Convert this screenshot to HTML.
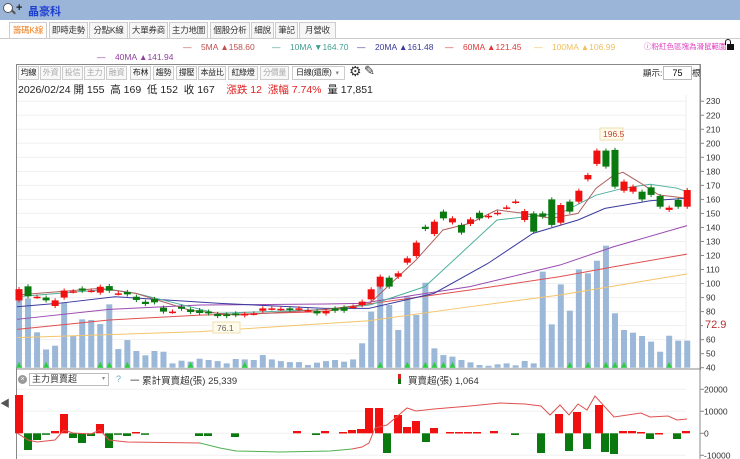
<!DOCTYPE html>
<html><head><meta charset="utf-8">
<style>
*{margin:0;padding:0;box-sizing:border-box}
body{width:740px;height:459px;overflow:hidden;background:#fff;font-family:"Liberation Sans","Noto Sans CJK TC",sans-serif;position:relative}
.a{position:absolute;white-space:nowrap}
.top{left:0;top:0;width:740px;height:20px;background:#9bb5d9}
.tab{position:absolute;top:22px;height:16px;border:1px solid #ccc;border-bottom:none;background:#f6f6f6;font-size:8.5px;line-height:15px;text-align:center;color:#333;white-space:nowrap;overflow:hidden;letter-spacing:-0.2px}
.btn{position:absolute;top:66px;height:14px;border:1px solid #ccc;background:#f8f8f8;font-size:8px;line-height:12px;text-align:center;color:#222;white-space:nowrap;overflow:hidden;letter-spacing:-0.3px}
.g{color:#aaa}
.leg{font-size:8.5px;top:42px}
</style></head><body>
<div class="a top"></div>
<div class="a" style="left:3px;top:3px;width:10px;height:10px;border:1.5px solid #555;border-radius:50%;background:#fff"></div>
<div class="a" style="left:11px;top:11px;width:5px;height:2px;background:#555;transform:rotate(45deg)"></div>
<div class="a" style="left:16px;top:2px;font-size:11px;font-weight:bold;color:#222">+</div>
<div class="a" style="left:28px;top:3px;font-size:11px;font-weight:bold;color:#1d3fd0">晶豪科</div>
<div class="a" style="left:0;top:38px;width:740px;height:1px;background:#ccc"></div>
<div class="tab" style="left:9px;width:38px;background:#fff;color:#f08020">籌碼K線</div>
<div class="tab" style="left:49px;width:39px">即時走勢</div>
<div class="tab" style="left:89px;width:39px">分點K線</div>
<div class="tab" style="left:129px;width:39px">大單券商</div>
<div class="tab" style="left:169px;width:39px">主力地圖</div>
<div class="tab" style="left:210px;width:40px">個股分析</div>
<div class="tab" style="left:251px;width:23px">細說</div>
<div class="tab" style="left:275px;width:23px">筆記</div>
<div class="tab" style="left:299px;width:37px">月營收</div>
<div class="a leg" style="left:183px;color:#c0504d">—&nbsp;&nbsp;&nbsp;&nbsp;5MA ▲158.60</div>
<div class="a leg" style="left:272px;color:#40a090">—&nbsp;&nbsp;&nbsp;&nbsp;10MA ▼164.70</div>
<div class="a leg" style="left:357px;color:#3a3a9a">—&nbsp;&nbsp;&nbsp;&nbsp;20MA ▲161.48</div>
<div class="a leg" style="left:445px;color:#e03838">—&nbsp;&nbsp;&nbsp;&nbsp;60MA ▲121.45</div>
<div class="a leg" style="left:534px;color:#f0c060">—&nbsp;&nbsp;&nbsp;&nbsp;100MA ▲106.99</div>
<div class="a leg" style="left:97px;top:52px;color:#9040a0">—&nbsp;&nbsp;&nbsp;&nbsp;40MA ▲141.94</div>
<div class="a leg" style="left:644px;top:41px;font-size:7.5px;color:#e040c0">ⓘ粉紅色區塊為滑鼠範圍</div>
<div class="a" style="left:727px;top:44px;width:7px;height:6px;background:#111"></div>
<div class="a" style="left:725px;top:39px;width:6px;height:6px;border:1.5px solid #111;border-bottom:none;border-radius:3px 3px 0 0"></div>
<div class="a" style="left:16px;top:64px;width:685px;height:306px;border:1px solid #888;border-bottom:none"></div>
<div class="a" style="left:16px;top:64px;width:1px;height:395px;background:#888"></div>
<div class="btn" style="left:18px;width:21px">均線</div>
<div class="btn g" style="left:40px;width:21px">外資</div>
<div class="btn g" style="left:62px;width:21px">投信</div>
<div class="btn g" style="left:84px;width:21px">主力</div>
<div class="btn g" style="left:106px;width:21px">融資</div>
<div class="btn" style="left:130px;width:21px">布林</div>
<div class="btn" style="left:153px;width:21px">趨勢</div>
<div class="btn" style="left:176px;width:21px">撐壓</div>
<div class="btn" style="left:198px;width:28px">本益比</div>
<div class="btn" style="left:228px;width:30px">紅綠燈</div>
<div class="btn g" style="left:260px;width:29px">分價量</div>
<div class="btn" style="left:292px;width:53px;background:#fff;text-align:left;padding-left:3px">日線(還原) <span style="color:#888;font-size:7px;margin-left:2px">▾</span></div>
<div class="a" style="left:349px;top:63px;font-size:14px;color:#333">⚙</div>
<div class="a" style="left:364px;top:63px;font-size:13px;color:#333">✎</div>
<div class="a" style="left:643px;top:67px;font-size:8.5px;color:#222">顯示:</div>
<div class="a" style="left:663px;top:66px;width:29px;height:14px;border:1px solid #bbb;font-size:9px;line-height:12px;text-align:center">75</div>
<div class="a" style="left:692px;top:67px;font-size:8.5px;color:#222">根</div>
<div class="a" style="left:18px;top:82px;font-size:10.5px;color:#222">2026/02/24 開 155&nbsp; 高 169&nbsp; 低 152&nbsp; 收 167&nbsp;&nbsp;&nbsp; <span style="color:#e02020">漲跌 12&nbsp; 漲幅 7.74%</span>&nbsp; 量 17,851</div>
<div class="a" style="left:0;top:395px;font-size:10px;color:#555">◀</div>
<div class="a" style="left:18px;top:375px;width:9px;height:9px;border-radius:50%;background:#999;color:#fff;font-size:7px;line-height:9px;text-align:center">×</div>
<div class="a" style="left:29px;top:373px;width:80px;height:13px;border:1px solid #bbb;font-size:9px;line-height:11px;padding-left:2px;color:#333">主力買賣超<span style="position:absolute;right:3px;font-size:6px;color:#888">▾</span></div>
<div class="a" style="left:116px;top:374px;font-size:9px;color:#6ab">?</div>
<div class="a" style="left:130px;top:373px;font-size:9.5px;color:#333">一 累計買賣超(張) 25,339</div>
<div class="a" style="left:398px;top:374px;width:3px;height:5px;background:#e02020"></div>
<div class="a" style="left:398px;top:379px;width:3px;height:5px;background:#107010"></div>
<div class="a" style="left:408px;top:373px;font-size:9.5px;color:#333">買賣超(張) 1,064</div>
<svg class="a" style="left:0;top:0" width="740" height="459" id="s"></svg>
<script>
var NS="http://www.w3.org/2000/svg",s=document.getElementById('s');
function el(t,a){var e=document.createElementNS(NS,t);for(var k in a)e.setAttribute(k,a[k]);s.appendChild(e);return e}
function Y(p){return 143.3+(200-p)*1.4025}
function X(i){return 19+i*9.03}
for(var p=40;p<=230;p+=10){var y=Y(p);el('line',{x1:17,x2:686,y1:y,y2:y,stroke:'#f0f0f0'});el('line',{x1:700,x2:704,y1:y,y2:y,stroke:'#888'});var t=el('text',{x:706,y:y+3,'font-size':8.5,fill:'#333','font-family':'Liberation Sans'});t.textContent=p;}
el('line',{x1:686,x2:686,y1:95,y2:369,stroke:'#eee'});
el('line',{x1:700,x2:700,y1:64,y2:459,stroke:'#888'});
el('line',{x1:17,x2:700,y1:369,y2:369,stroke:'#888'});
var c=[[88,96],[98,91],[90.6,90.6],[90,88],[84,88],[90,95],[94.5,94.5],[96.5,94.9],[95,95],[93.5,97.7],[98.2,94.9],[93,93],[94,92.3],[90.6,88.3],[87,85.4],[89,86.6],[82.8,80],[80,80],[83.5,82],[81.6,79.7],[81,79],[80,78.7],[78.3,76.8],[78,76.8],[78.7,77.5],[77.3,78.3],[78.7,78.7],[80.6,82.3],[82.3,82.3],[82,82],[82.3,81.1],[81.6,82.3],[81,81],[80.4,78.7],[78.7,80.6],[82.3,80.6],[83,80.6],[83.3,83.6],[84.7,87.1],[88.7,95.9],[97.8,104.9],[104.2,97.8],[104.9,107.3],[114.9,118],[119.6,129.2],[140.5,138.9],[135.3,144.1],[151.3,146.5],[143.6,146.5],[141.8,136.3],[142.5,145.8],[150.5,146.5],[147.7,148.3],[150,150.5],[154.3,154.3],[158.2,158.5],[145.3,151.7],[150,137],[150,147.7],[160,141.8],[143.4,156],[158.4,151.3],[158.4,166.2],[174.3,177.4],[185.3,194.8],[194.8,183.4],[195.3,169.1],[166.2,172.7],[165.5,169.1],[165.5,160],[168.6,163.2],[162.4,154.8],[152.5,154.1],[159.6,154.8],[154.8,166.7]];
var v=[91,89.4,65.2,53,55.7,86.6,62.8,74.5,74,71.1,85.2,53.3,59.7,51.9,48.8,51.9,51.4,43.1,45,44.3,46.4,45.5,44.7,43.1,46.2,45.9,45.5,49,45.9,44.7,44,44,41.9,43.6,44.7,45.5,44.3,45.9,57.4,80,97.8,84.7,66.9,90.7,77.6,100.6,53.8,49,47.9,45.5,43.8,41.9,41.4,42.4,43.1,41.7,44.8,43.1,108.5,70.9,99.4,80.7,110.1,107.3,116.3,127,78.8,66.9,65,62.6,58.6,51.4,62.8,59.3,59.3];
var yb=367.7;
v.forEach(function(h,i){el('rect',{x:X(i)-3,y:Y(h),width:6,height:yb-Y(h),fill:'#9bb8d8'})});
[0,3,9,10,12,19,25,40,43,45,46,47,48,61,63,65,66,67,72].forEach(function(i){el('polygon',{points:(X(i)-3)+','+(yb)+' '+(X(i)+3)+','+yb+' '+X(i)+','+(yb-6),fill:'#2ecc40'})});
function pl(pts,col){el('polyline',{points:pts.map(function(q){return q[0]+','+Y(q[1])}).join(' '),fill:'none',stroke:col,'stroke-width':1})}
pl([[17,61.4],[200,65.7],[369,73.5],[470,83.5],[560,91.8],[650,102.5],[687,106.8]],'#f5c46a');
pl([[17,67.3],[109,74],[200,77.5],[325,80],[361,84.7],[470,95.4],[560,104.9],[614,112],[687,121]],'#e05050');
pl([[17,74.5],[109,81.6],[200,84.7],[325,85.4],[361,85.9],[470,97.8],[560,113.2],[614,126.3],[687,141.3]],'#9a4ab0');
pl([[17,83.5],[60,86],[115,90.6],[220,85.9],[325,82.3],[369,82.3],[434,93],[488,114.4],[533,135.8],[578,145.3],[605,153.6],[650,159],[687,160.8]],'#3a3aa0');
pl([[17,90.6],[109,95.9],[136,93],[217,78.7],[325,81.5],[370,84.7],[425,97.8],[461,121.5],[497,145.3],[533,148.2],[560,150],[596,163],[623,167.9],[650,170.8],[677,168],[687,165.5]],'#50b0a0');
pl([[17,91.8],[100,96.6],[136,93],[190,81],[236,77.5],[325,81.5],[361,84.7],[370,86],[416,116.8],[443,138.2],[470,143],[497,152.5],[524,150],[551,146.5],[578,150],[596,167.9],[614,177.4],[623,179.3],[641,171.5],[659,163.1],[687,160.8]],'#b06060');
c.forEach(function(o,i){var up=o[1]>=o[0],col=up?'#f01010':'#0a7a10',x=X(i),hi=Math.max(o[0],o[1]),lo=Math.min(o[0],o[1]);
 el('line',{x1:x,x2:x,y1:Y(hi+1.5),y2:Y(lo-1.5),stroke:col});
 var h=Math.max(1.5,Y(lo)-Y(hi));el('rect',{x:x-3.5,y:Y(hi),width:7,height:h,fill:col});});
el('rect',{x:600,y:128,width:23,height:12,fill:'#fffbe8',stroke:'#eedfb0'});
var t=el('text',{x:603,y:137,'font-size':8.5,fill:'#c04040','font-family':'Liberation Sans'});t.textContent='196.5';
el('rect',{x:213,y:322,width:27,height:11,fill:'#fffbe8',stroke:'#eedfb0'});
t=el('text',{x:217,y:331,'font-size':8.5,fill:'#666','font-family':'Liberation Sans'});t.textContent='76.1';
el('rect',{x:703,y:318,width:30,height:12,fill:'#fff'});
t=el('text',{x:705,y:328,'font-size':11,fill:'#b03030','font-family':'Liberation Sans'});t.textContent='72.9';
function Z(v){return 433.3-v*0.0022}
[20000,10000,0,-10000].forEach(function(q){var y=Z(q);el('line',{x1:17,x2:686,y1:y,y2:y,stroke:'#f0f0f0'});el('line',{x1:700,x2:704,y1:y,y2:y,stroke:'#888'});var t=el('text',{x:704,y:y+3,'font-size':8.5,fill:'#333','font-family':'Liberation Sans'});t.textContent=q;});
var bars=[[19,395],[28,450],[37,440],[46,434],[55,431],[64,414],[73,438],[82,443],[91,436],[100,424],[109,448],[118,434],[127,436],[136,432],[145,434],[199,436],[208,436],[235,437],[297,431],[316,435],[325,431],[343,432],[352,430],[361,429],[369,408],[379,408],[387,453],[398,415],[407,427],[416,421],[426,442],[434,428],[450,432],[459,432],[468,432],[477,432],[494,431],[515,435],[541,453],[559,414],[569,451],[577,412],[587,449],[599,405],[605,452],[614,454],[623,431],[632,431],[641,432],[650,439],[659,433],[677,439],[686,431]];
bars.forEach(function(b){var y=b[1],z=433.3,r=y<z;el('rect',{x:b[0]-4,y:r?y:z,width:8,height:Math.max(1.5,Math.abs(y-z)),fill:r?'#f01010':'#0a7a10'})});
el('polyline',{points:'17,433 28,440 37,442 55,440 64,430 73,433 91,434 100,430 109,440 127,442 200,443',fill:'none',stroke:'#e05050'});
el('polyline',{points:'200,443 220,448 236,451 280,452 330,451 352,449',fill:'none',stroke:'#50b050'});
el('polyline',{points:'352,449 362,447 369,443 375,428 387,425 407,408 416,411 434,409 470,406 500,403 525,404 541,406 550,415 560,405 569,415 578,404 587,410 595,396 614,417 641,413 650,417 668,416 677,420 687,419',fill:'none',stroke:'#e05050'});
</script>
</body></html>
